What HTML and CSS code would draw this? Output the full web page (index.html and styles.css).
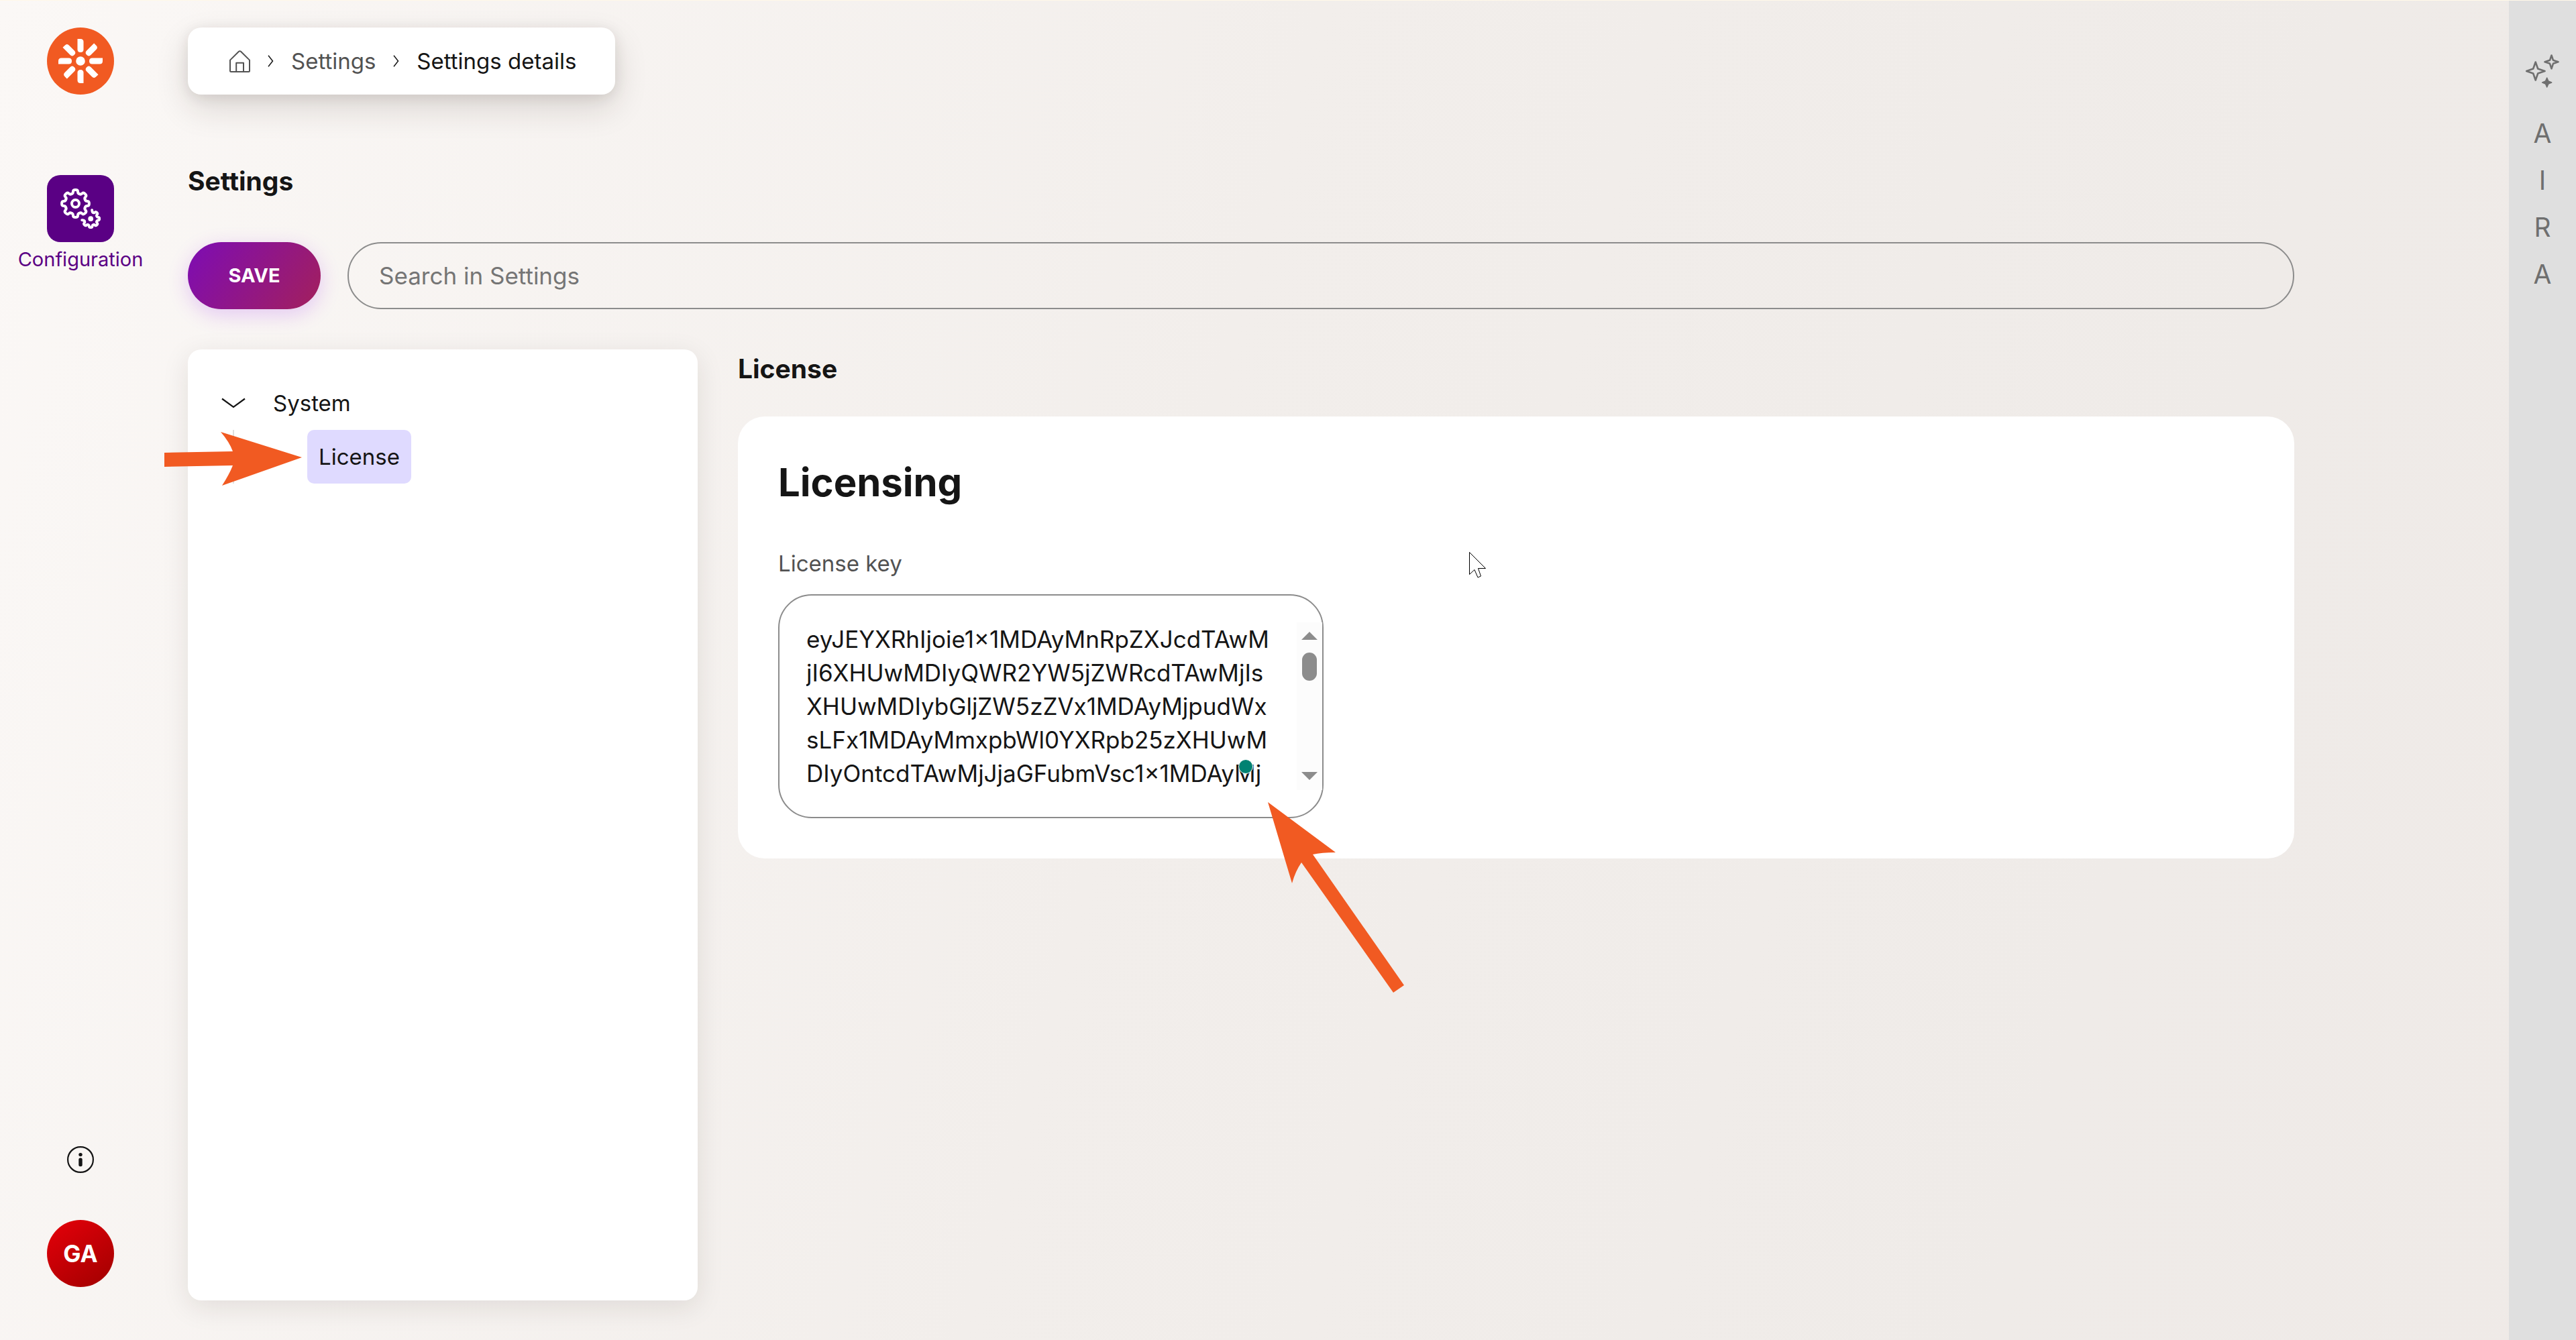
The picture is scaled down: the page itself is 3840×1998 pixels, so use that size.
FILE: index.html
```html
<!DOCTYPE html>
<html lang="en">
<head>
<meta charset="utf-8">
<title>Settings details</title>
<link rel="stylesheet" href="styles.css">
</head>
<body>
<div class="app">
  <nav class="sidebar" aria-label="Applications">
    <a class="logo" href="#" aria-label="Home">
      <svg viewBox="0 0 100 100" width="100" height="100">
        <defs>
          <path id="petal" d="M17.5-4.5H33V0Q33 4.5 28.5 4.5H17.5Q13 4.5 13 0T17.5-4.5Z"/>
        </defs>
        <circle cx="50" cy="50" r="50" fill="#f15a22"/>
        <g transform="translate(50 50)" fill="#fff">
          <circle r="6.8"/>
          <use href="#petal"/>
          <use href="#petal" transform="rotate(45)"/>
          <use href="#petal" transform="rotate(90)"/>
          <use href="#petal" transform="rotate(135)"/>
          <use href="#petal" transform="rotate(180)"/>
          <use href="#petal" transform="rotate(225)"/>
          <use href="#petal" transform="rotate(270)"/>
          <use href="#petal" transform="rotate(315)"/>
        </g>
      </svg>
    </a>
    <a class="app-link" href="#">
      <span class="app-tile">
        <svg viewBox="0 0 60 60" width="60" height="60" fill="none" stroke="#fff" stroke-linecap="round" stroke-linejoin="round">
          <defs>
            <path id="tooth" d="M14.3-5.9L14.9-4.6Q15.5-3.6 17-3.6H18Q20.4-3.4 20.4 0Q20.4 3.4 18 3.6H17Q15.5 3.6 14.9 4.6L14.3 5.9"/>
          </defs>
          <g transform="translate(22.5 22.5)" stroke-width="4">
            <circle r="5.5"/>
            <use href="#tooth"/>
            <use href="#tooth" transform="rotate(45)"/>
            <use href="#tooth" transform="rotate(90)"/>
            <use href="#tooth" transform="rotate(135)"/>
            <use href="#tooth" transform="rotate(180)"/>
            <use href="#tooth" transform="rotate(225)"/>
            <use href="#tooth" transform="rotate(270)"/>
            <use href="#tooth" transform="rotate(315)"/>
          </g>
          <g transform="translate(45.2 45.2) scale(.64)" stroke-width="6">
            <circle r="6" fill="#fff" stroke="none"/>
            <use href="#tooth"/>
            <use href="#tooth" transform="rotate(45)"/>
            <use href="#tooth" transform="rotate(90)"/>
            <use href="#tooth" transform="rotate(135)"/>
            <use href="#tooth" transform="rotate(315)"/>
            <path d="M3-20.4L3.6-17Q3.6-15.5 4.6-14.9L5.9-14.3M-20.4 3L-17 3.6Q-15.5 3.6-14.9 4.6L-14.3 5.9"/>
          </g>
        </svg>
      </span>
      <span class="app-name">Configuration</span>
    </a>
    <div class="sidebar-foot">
      <button class="icon-button" type="button" aria-label="Help">
        <svg viewBox="0 0 40 40" width="40" height="40">
          <circle cx="20" cy="20" r="18.9" fill="none" stroke="#151515" stroke-width="2.2"/>
          <circle cx="20" cy="12.6" r="2.7" fill="#151515"/>
          <rect x="17.3" y="17.4" width="5.4" height="12.8" rx="2.5" fill="#151515"/>
        </svg>
      </button>
      <button class="avatar" type="button">GA</button>
    </div>
  </nav>

  <main class="main">
    <nav class="breadcrumbs" aria-label="Breadcrumbs">
      <a class="crumb-home" href="#" aria-label="Dashboard">
        <svg viewBox="0 0 31 33" width="31" height="33" fill="none" stroke="#525252" stroke-width="2" stroke-linejoin="round">
          <path d="M1 14.6L14 1.8Q15.5.6 17 1.8L30 14.6V30.5Q30 32 28.5 32H2.500Q1 32 1 30.500ZM10.200 32V18.800H21V32"/>
        </svg>
      </a>
      <svg class="crumb-sep" viewBox="0 0 9 18" width="9" height="18"><path d="M1 .8L7.500 9 1 17.200" fill="none" stroke="#151515" stroke-width="1.500"/></svg>
      <a class="crumb" href="#">Settings</a>
      <svg class="crumb-sep" viewBox="0 0 9 18" width="9" height="18"><path d="M1 .8L7.500 9 1 17.200" fill="none" stroke="#151515" stroke-width="1.500"/></svg>
      <span class="crumb-current">Settings details</span>
    </nav>

    <h1 class="page-title">Settings</h1>

    <form class="toolbar">
      <button class="save" type="button">SAVE</button>
      <input class="search" type="text" placeholder="Search in Settings" aria-label="Search in Settings">
    </form>

    <div class="columns">
      <section class="tree" aria-label="Settings categories">
        <button class="tree-parent" type="button">
          <svg viewBox="0 0 36 16" width="36" height="16"><path d="M1 1.500L18 14 35 1.500" fill="none" stroke="#151515" stroke-width="2.200"/></svg>
          System
        </button>
        <div class="tree-children">
          <a class="tree-item" href="#">License</a>
          <svg class="pointer-right" viewBox="0 0 206 84" width="206" height="84">
            <path d="M0 32L102 30Q97 16 84 1L205 39 86 81Q97 64 102 51L0 53Z" fill="#f15a22"/>
          </svg>
        </div>
      </section>

      <section class="details">
        <h2 class="section-title">License</h2>
        <div class="card">
          <h3 class="card-title">Licensing</h3>
          <label class="field-label" for="license-key">License key</label>
          <div class="key-box">
            <textarea class="key-input" id="license-key" rows="5" spellcheck="false">eyJEYXRhIjoie1x1MDAyMnRpZXJcdTAwM
jI6XHUwMDIyQWR2YW5jZWRcdTAwMjIs
XHUwMDIybGljZW5zZVx1MDAyMjpudWx
sLFx1MDAyMmxpbWl0YXRpb25zXHUwM
DIyOntcdTAwMjJjaGFubmVsc1x1MDAyMj</textarea>
            <svg class="key-scroll" viewBox="0 0 38 250" width="38" height="250">
              <rect width="38" height="250" fill="#fcfcfc"/>
              <path d="M7 26L19 14 31 26ZM7 223L19 235 31 223Z" fill="#8c8c8c"/>
              <rect x="8" y="45" width="22" height="42" rx="11" fill="#8c8c8c"/>
            </svg>
            <span class="key-status"></span>
            <svg class="pointer-up" viewBox="0 0 204 286" width="204" height="286">
              <path d="M0 0L101 75Q80 75 67 78L203 273 187 284 50 90Q41 103 36 121Z" fill="#f15a22"/>
            </svg>
          </div>
          <svg class="cursor" viewBox="0 0 26 39" width="26" height="39">
            <path d="M.5.500V33.500L8 26.500 13 38 17.500 36 13.500 24.500H24.500Z" fill="#fff" stroke="#000"/>
          </svg>
        </div>
      </section>
    </div>
  </main>

  <aside class="rail">
    <button class="rail-button" type="button" aria-label="AIRA">
      <svg viewBox="0 0 50 50" width="50" height="50" fill="none" stroke="#6f6f6f" stroke-width="2.600" stroke-linejoin="round">
        <path d="M14.700 11.500L18.200 21.500 28.500 25 18.200 28.500 14.700 38.500 11.200 28.500 1.200 25 11.200 21.500Z"/>
        <path d="M38.500 1.500L41 8.800 48.500 11.300 41 13.800 38.500 21.300 36 13.800 28.500 11.300 36 8.800Z"/>
        <path d="M31.700 35L33.800 39.900 38.700 42 33.800 44.100 31.700 49 29.600 44.100 24.700 42 29.600 39.900Z" fill="#6f6f6f" stroke-width="1.500"/>
      </svg>
      <span>A</span><span>I</span><span>R</span><span>A</span>
    </button>
  </aside>
</div>
</body>
</html>
```
FILE: styles.css
```css
* {
  box-sizing: border-box;
}

body {
  margin: 0;
  font-family: Inter, "Liberation Sans", sans-serif;
  font-size: 33px;
  line-height: 50px;
  color: #151515;
}

a {
  color: inherit;
  text-decoration: none;
}

button {
  padding: 0;
  border: 0;
  background: none;
  font: inherit;
  color: inherit;
}

h1, h2, h3 {
  margin: 0;
  font-weight: 700;
}

svg {
  display: block;
  flex: none;
}

.app {
  display: grid;
  grid-template-columns: 240px 1fr 100px;
  min-height: 100vh;
  border-top: 1px solid #fff8e8;
  background: linear-gradient(105deg, #fbf8f6 0%, #f2eeeb 45%, #efebe8 80%, #efeae7 100%);
}

/* Left application bar */
.sidebar {
  display: flex;
  flex-direction: column;
  align-items: center;
  padding: 40px 0 79px;
}

.app-link {
  display: flex;
  flex-direction: column;
  align-items: center;
  gap: 6px;
  margin-top: 120px;
  color: #5a0084;
}

.app-tile {
  display: grid;
  place-items: center;
  width: 100px;
  height: 100px;
  border-radius: 20px;
  background: #5a0084;
}

.app-name {
  font-size: 29px;
  line-height: 40px;
}

.sidebar-foot {
  display: flex;
  flex-direction: column;
  align-items: center;
  gap: 70px;
  margin-top: auto;
}

.avatar {
  width: 100px;
  height: 100px;
  border-radius: 50%;
  background: linear-gradient(145deg, #e6000a, #a00000);
  font-size: 35px;
  font-weight: 700;
  color: #fff;
}

/* Main area */
.main {
  display: flex;
  flex-direction: column;
  padding: 40px 320px 59px 40px;
}

.breadcrumbs {
  display: flex;
  align-items: center;
  align-self: flex-start;
  gap: 26px;
  height: 100px;
  padding: 0 58px 0 62px;
  border-radius: 20px;
  background: #fff;
  box-shadow: 0 20px 50px rgba(40, 30, 20, .14), 0 4px 20px rgba(40, 30, 20, .1);
}

.crumb {
  color: #525252;
}

.page-title {
  margin-top: 104px;
  font-size: 39px;
}

.toolbar {
  display: flex;
  gap: 40px;
  margin-top: 66px;
}

.save {
  width: 198px;
  height: 100px;
  border-radius: 50px;
  background: linear-gradient(125deg, #7d0cb4, #a3205c);
  box-shadow: 0 8px 30px rgba(160, 40, 240, .22);
  font-size: 29px;
  font-weight: 700;
  color: #fff;
}

.search {
  flex: 1;
  height: 100px;
  padding: 0 45px;
  border: 2px solid #8c8c8c;
  border-radius: 50px;
  background: transparent;
  font: 35px Inter, "Liberation Sans", sans-serif;
  color: #151515;
}

.search::placeholder {
  color: #757575;
}

.columns {
  display: flex;
  flex: 1;
  gap: 60px;
  margin-top: 60px;
}

/* Category tree */
.tree {
  width: 760px;
  padding: 40px 50px;
  border-radius: 20px;
  background: #fff;
  box-shadow: 0 10px 40px rgba(40, 30, 20, .1);
}

.tree-parent {
  display: flex;
  align-items: center;
  gap: 41px;
  height: 80px;
}

.tree-children {
  position: relative;
  margin-left: 17px;
  padding-left: 109px;
  border-left: 2px solid #dfdfdf;
}

.tree-item {
  display: inline-flex;
  align-items: center;
  height: 80px;
  padding: 0 17px;
  border-radius: 10px;
  background: #dfdaff;
  vertical-align: top;
}

.pointer-right {
  position: absolute;
  top: 2px;
  left: -104px;
}

/* License details */
.details {
  flex: 1;
}

.section-title {
  padding-top: 4px;
  font-size: 39px;
}

.card {
  position: relative;
  margin-top: 46px;
  padding: 60px;
  border-radius: 40px;
  background: #fff;
}

.card-title {
  font-size: 58px;
  line-height: 76px;
}

.field-label {
  display: block;
  margin-top: 58px;
  color: #525252;
}

.key-box {
  position: relative;
  display: flex;
  width: 813px;
  margin-top: 21px;
  padding: 40px 0 40px 40px;
  border: 2px solid #8c8c8c;
  border-radius: 50px;
}

.key-input {
  flex: 1;
  min-width: 0;
  height: 250px;
  padding: 0;
  border: 0;
  background: none;
  font: 35px/50px Inter, "Liberation Sans", sans-serif;
  color: #151515;
  white-space: pre;
  overflow: hidden;
  resize: none;
}

.key-status {
  position: absolute;
  top: 244px;
  right: 103px;
  width: 22px;
  height: 22px;
  border: 1px solid #fff;
  border-radius: 50%;
  background: #008272;
}

.pointer-up {
  position: absolute;
  top: 308px;
  left: 728px;
}

.cursor {
  position: absolute;
  top: 202px;
  left: 1090px;
}

/* Assistant rail */
.rail {
  background: #dfdfdf;
}

.rail-button {
  display: flex;
  flex-direction: column;
  align-items: center;
  width: 100%;
  padding-top: 80px;
  font-size: 39px;
  line-height: 70px;
  color: #6f6f6f;
}

.rail-button svg {
  margin-bottom: 33px;
}
```
